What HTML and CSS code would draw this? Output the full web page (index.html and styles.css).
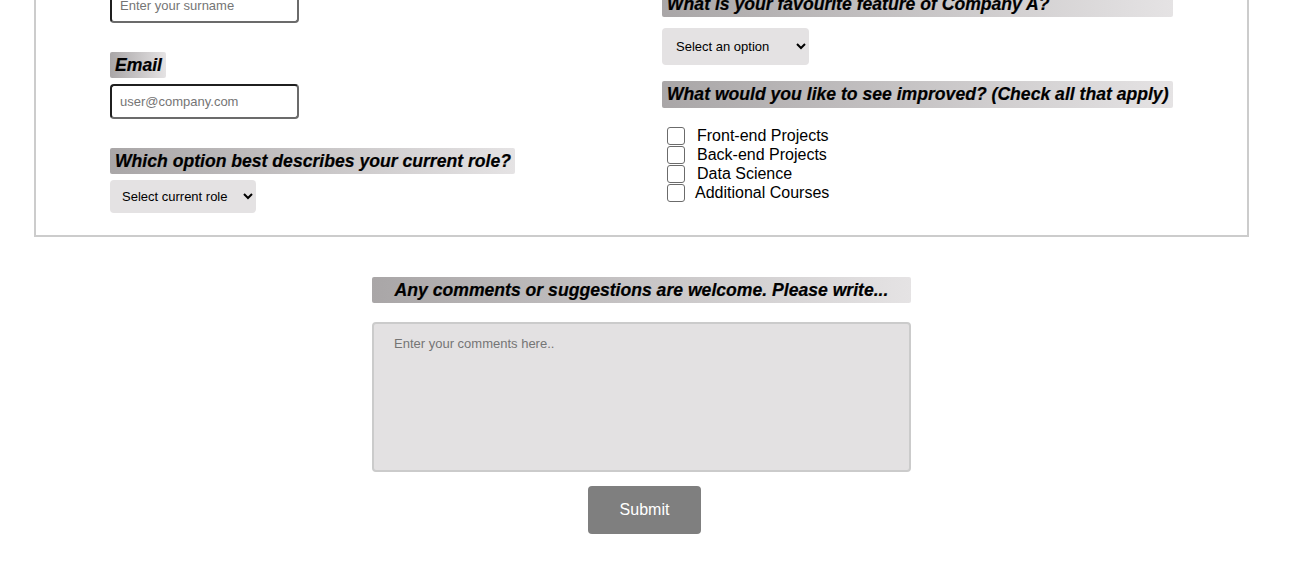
FILE: index.html
```html
<!DOCTYPE html>
<html lang="en">
<head>
<meta charset="utf-8">
<title>Survey</title>
<link rel="stylesheet" href="styles.css">
</head>
<body>
<form class="survey">
  <div class="panel">
    <div class="col col-left">
      <input class="text-input" type="text" placeholder="Enter your surname">
      <label class="tag tag-email">Email</label>
      <input class="text-input email-input" type="email" placeholder="user@company.com">
      <label class="tag tag-role">Which option best describes your current role?</label>
      <select class="pick pick-role">
        <option>Select current role</option>
      </select>
    </div>
    <div class="col col-right">
      <label class="tag tag-block">What is your favourite feature of Company A?</label>
      <select class="pick pick-feature">
        <option>Select an option</option>
      </select>
      <label class="tag tag-block tag-improve">What would you like to see improved? (Check all that apply)</label>
      <div class="checks">
        <label class="check"><input type="checkbox"><span>Front-end Projects</span></label>
        <label class="check"><input type="checkbox"><span>Back-end Projects</span></label>
        <label class="check"><input type="checkbox"><span>Data Science</span></label>
        <label class="check check-tight"><input type="checkbox"><span>Additional Courses</span></label>
      </div>
    </div>
  </div>
  <div class="comments">
    <label class="tag tag-center">Any comments or suggestions are welcome. Please write...</label>
    <textarea class="comment-box" placeholder="Enter your comments here.."></textarea>
    <button class="submit" type="submit">Submit</button>
  </div>
</form>
</body>
</html>
```
FILE: styles.css
```css
html, body {
  margin: 0;
  padding: 0;
  background: #ffffff;
  overflow: hidden;
}
body {
  font-family: "Liberation Sans", Arial, sans-serif;
  color: #000;
  padding: 0 61px 0 34px;
}
.survey {
  display: block;
}
.panel {
  margin-top: -40px;
  border: 2px solid #cccccc;
  padding: 26px 0 22px 74px;
  display: grid;
  grid-template-columns: 552px auto;
  justify-content: start;
  align-items: start;
}
.col {
  display: flex;
  flex-direction: column;
  align-items: flex-start;
}
.col-right {
  margin-top: 3px;
  align-items: stretch;
  width: fit-content;
}
.tag {
  display: inline-block;
  font-weight: bold;
  font-style: italic;
  font-size: 17.6px;
  line-height: 26px;
  height: 26px;
  padding: 0 4px 0 5px;
  border-radius: 2px;
  background: linear-gradient(to right, #a9a6a7, #e5e3e4);
  -webkit-text-stroke: 0.2px #000;
}
.tag-block {
  display: block;
}
.tag-email {
  margin-top: 29px;
}
.tag-role {
  margin-top: 29px;
}
.text-input {
  box-sizing: border-box;
  width: 189px;
  height: 35px;
  margin: 0;
  padding: 0 8px;
  font-family: "Liberation Sans", Arial, sans-serif;
  font-size: 13px;
  border-width: 2px;
  border-style: solid;
  border-color: #1f1f1f #6b6b6b #6b6b6b #1f1f1f;
  border-radius: 4px;
  background: #fff;
  outline: none;
}
.text-input::placeholder {
  color: #757575;
}
.email-input {
  margin-top: 6px;
}
.pick {
  box-sizing: border-box;
  margin: 0;
  border: none;
  border-radius: 4px;
  background-color: #e4e2e3;
  font-family: "Liberation Sans", Arial, sans-serif;
  font-size: 13px;
  color: #000;
  padding: 0 8px 0 8px;
}
.pick-role {
  width: 146px;
  height: 33px;
  margin-top: 6px;
}
.pick-feature {
  width: 147px;
  height: 37px;
  margin-top: 11px;
  padding-left: 10px;
  align-self: flex-start;
}
.tag-improve {
  margin-top: 16px;
  height: 27px;
  line-height: 27px;
}
.checks {
  margin-top: 18px;
  display: flex;
  flex-direction: column;
}
.check {
  display: flex;
  align-items: center;
  height: 19px;
  font-size: 16px;
  line-height: 19px;
}
.check input {
  appearance: none;
  -webkit-appearance: none;
  box-sizing: border-box;
  width: 18px;
  height: 18px;
  margin: 0 12px 0 5px;
  border: 1.5px solid #6b6b6b;
  border-radius: 3px;
  background: #fff;
  flex: none;
}
.check-tight input {
  margin-right: 10px;
}
.comments {
  width: 539px;
  margin: 40px auto 0;
  display: flex;
  flex-direction: column;
  align-items: stretch;
}
.tag-center {
  display: block;
  text-align: center;
  padding: 0;
}
.comment-box {
  box-sizing: border-box;
  margin: 19px 0 0;
  height: 150px;
  width: 539px;
  border: 2px solid #cbcbcb;
  border-radius: 4px;
  background: #e3e1e2;
  padding: 12px 20px;
  font-family: "Liberation Sans", Arial, sans-serif;
  font-size: 13px;
  resize: none;
  outline: none;
}
.comment-box::placeholder {
  color: #757575;
}
.submit {
  align-self: flex-start;
  margin: 14px 0 0 216px;
  width: 113px;
  height: 48px;
  border: none;
  border-radius: 4px;
  background: #7f7f7f;
  color: #ffffff;
  font-family: "Liberation Sans", Arial, sans-serif;
  font-size: 16px;
  cursor: pointer;
}
```
